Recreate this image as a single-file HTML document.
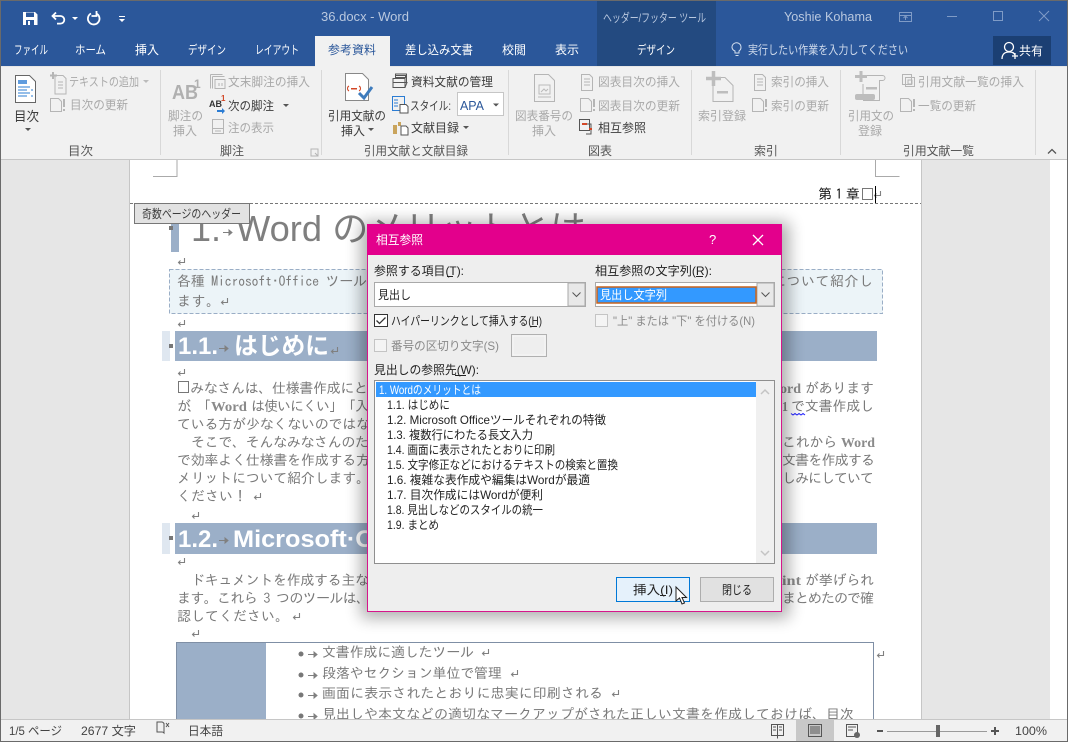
<!DOCTYPE html>
<html lang="ja"><head><meta charset="utf-8"><title>36.docx - Word</title>
<style>
html,body{margin:0;padding:0;background:#fff;width:1068px;height:742px;overflow:hidden}
svg{display:block}
text{font-family:"Liberation Sans","Noto Sans CJK JP",sans-serif;font-size:12px;white-space:pre}
.w{fill:#fff}.t{fill:#b9c8df}.k{fill:#3c3c3c}.g{fill:#a9a9a9}.b{fill:#2b579a}
.l{fill:#555}
.dl{fill:#222;font-size:12px}
.dd{fill:#8a8a8a}
.li{fill:#222;font-size:12px}
.d{font-family:"IPAGothic","Noto Sans CJK JP",sans-serif;font-size:14px;fill:#7a7a7a}
.ds{font-family:"Liberation Serif",serif;font-size:14px;font-weight:bold;fill:#8a8a8a}
.h{font-family:"Liberation Sans","Noto Sans CJK JP",sans-serif;font-weight:bold;font-size:24px;fill:#fff}
.s{fill:#444;font-size:12px}
.ic{fill:none;stroke:#b5b5b5;stroke-width:1}
.ik{fill:none;stroke:#555;stroke-width:1}
.rt{fill:none;stroke:#8a8a8a;stroke-width:1}
</style></head><body>
<svg width="1068" height="742" viewBox="0 0 1068 742" xmlns="http://www.w3.org/2000/svg">
<defs>
<filter id="sh" x="-10%" y="-10%" width="120%" height="120%"><feGaussianBlur stdDeviation="8"/></filter>
<g id="upd"><path class="ic" d="M.5 .5h8l3 3v10H.5z"/><rect x="13" y="1" width="2" height="8" fill="#b5b5b5"/><rect x="13" y="11" width="2" height="2" fill="#b5b5b5"/></g>
<g id="docl"><path class="ic" d="M.5 .5h8l3 3v13H.5z M3 5h6M3 8h6M3 11h6"/></g>
<g id="ret"><path d="M7.500 0v4.500H1.500M3.500 2.500l-2 2 2 2" fill="none" stroke="#808080" stroke-width="1.100"/></g>
<g id="arr"><path d="M0 3.500h8M6 1l3 2.500-3 2.500z" fill="#808080" stroke="#808080"/></g>
</defs>

<!-- base -->
<rect width="1068" height="742" fill="#e6e6e6"/>
<rect x="1050" y="160" width="17" height="560" fill="#fff"/>
<rect x="130" y="160" width="791" height="560" fill="#fff"/>
<path d="M129.500 160V720M921.500 160V720" stroke="#c6c6c6"/>

<!-- crop marks / header -->
<path d="M177 160v16.500h-24M875.500 160v16.500h24" fill="none" stroke="#aaa"/>
<path d="M130 203.500H921" stroke="#777" stroke-dasharray="3 2"/>
<text x="818" y="199" textLength="42" style="font-family:'IPAGothic',sans-serif;font-size:14px;fill:#111">第 1 章</text>
<rect x="862.500" y="188.500" width="10" height="11" fill="none" stroke="#777"/>
<use href="#ret" x="873" y="191"/>
<rect x="875" y="186" width="1" height="17" fill="#000"/>

<!-- H1 -->
<rect x="171" y="222" width="8" height="30" fill="#9bafc8"/>
<rect x="169" y="226" width="4" height="4" fill="#777"/>
<text x="191" y="241" style="font-size:36px;fill:#7f7f7f">1.</text>
<use href="#arr" x="223" y="229"/>
<text x="236" y="241" style="font-size:36px;fill:#7f7f7f" textLength="350" lengthAdjust="spacingAndGlyphs">Word のメリットとは</text>
<rect x="134.500" y="203.500" width="115" height="20" fill="#e2e2e2" stroke="#777"/>
<text x="142" y="218" textLength="99" lengthAdjust="spacingAndGlyphs" class="k">奇数ページのヘッダー</text>

<use href="#ret" x="177" y="258"/>
<rect x="169.500" y="269.500" width="713" height="44" fill="#ecf4f8" stroke="#9aaec6" stroke-dasharray="4 2"/>
<text class="d" x="177" y="286" textLength="190">各種 Microsoft·Office ツール</text>
<text class="d" x="772" y="286" textLength="101">について紹介し</text>
<text class="d" x="177" y="306" textLength="43">ます。</text>
<use href="#ret" x="220" y="298"/>
<use href="#ret" x="177" y="320"/>

<!-- H 1.1 -->
<rect x="162" y="331" width="8" height="30" fill="#dfe7f0"/>
<rect x="175" y="331" width="702" height="30" fill="#9bafc8"/>
<rect x="169" y="344" width="4" height="4" fill="#777"/>
<text class="h" x="178" y="354" textLength="40" lengthAdjust="spacingAndGlyphs">1.1.</text>
<use href="#arr" x="219" y="345"/>
<text class="h" x="234" y="354" textLength="95" lengthAdjust="spacingAndGlyphs">はじめに</text>
<use href="#ret" x="330" y="347"/>
<use href="#ret" x="177" y="369"/>

<!-- body -->
<rect x="178.500" y="381.500" width="10" height="11" fill="none" stroke="#777"/>
<text class="d" x="190" y="393" textLength="178">みなさんは、仕様書作成にと</text>
<text class="ds" x="780" y="393" textLength="21" lengthAdjust="spacingAndGlyphs">ord</text>
<text class="d" x="805" y="393" textLength="69">があります</text>
<text class="d" x="177" y="411" textLength="34">が、「</text>
<text class="ds" x="211" y="411" textLength="36" lengthAdjust="spacingAndGlyphs">Word</text>
<text class="d" x="251" y="411" textLength="118">は使いにくい」「入</text>
<text class="ds" x="782" y="411" textLength="6" lengthAdjust="spacingAndGlyphs">1</text>
<text class="d" x="791" y="411" textLength="83">で文書作成し</text>
<path d="M791 413.500l2 1.500 2-1.500 2 1.500 2-1.500 2 1.500 2-1.500 2 1.500" fill="none" stroke="#22f"/>
<text class="d" x="177" y="429" textLength="193">ている方が少なくないのではな</text>
<text class="d" x="191" y="447" textLength="178">そこで、そんなみなさんのた</text>
<text class="d" x="782" y="447" textLength="55">これから</text>
<text class="ds" x="841" y="447" textLength="34" lengthAdjust="spacingAndGlyphs">Word</text>
<text class="d" x="177" y="465" textLength="193">で効率よく仕様書を作成する方</text>
<text class="d" x="782" y="465" textLength="93">文書を作成する</text>
<text class="d" x="177" y="483" textLength="193">メリットについて紹介します。</text>
<text class="d" x="782" y="483" textLength="92">しみにしていて</text>
<text class="d" x="177" y="501" textLength="70">ください！</text>
<use href="#ret" x="253" y="493"/>
<use href="#ret" x="191" y="512"/>

<!-- H 1.2 -->
<rect x="162" y="523" width="8" height="31" fill="#dfe7f0"/>
<rect x="175" y="523" width="702" height="31" fill="#9bafc8"/>
<rect x="169" y="536" width="4" height="4" fill="#777"/>
<text class="h" x="178" y="547" textLength="40" lengthAdjust="spacingAndGlyphs">1.2.</text>
<use href="#arr" x="219" y="537"/>
<text class="h" x="233" y="547" textLength="194" lengthAdjust="spacingAndGlyphs">Microsoft·Office</text>
<use href="#ret" x="177" y="558"/>

<text class="d" x="191" y="585" textLength="178">ドキュメントを作成する主な</text>
<text class="ds" x="782" y="585" textLength="19" lengthAdjust="spacingAndGlyphs">int</text>
<text class="d" x="805" y="585" textLength="69">が挙げられ</text>
<text class="d" x="177" y="603" textLength="193">ます。これら 3 つのツールは、</text>
<text class="d" x="782" y="603" textLength="92">まとめたので確</text>
<text class="d" x="177" y="621" textLength="112">認してください。</text>
<use href="#ret" x="292" y="613"/>
<use href="#ret" x="191" y="630"/>

<!-- table -->
<rect x="176.500" y="642.500" width="697" height="90" fill="#fff" stroke="#7f8fa5"/>
<rect x="177" y="643" width="89" height="77" fill="#9bafc8"/>
<use href="#ret" x="876" y="651"/>
<g fill="#777"><circle cx="301" cy="654" r="2.500"/><circle cx="301" cy="675" r="2.500"/><circle cx="301" cy="695" r="2.500"/><circle cx="301" cy="716" r="2.500"/></g>
<use href="#arr" x="308" y="651"/><use href="#arr" x="308" y="672"/><use href="#arr" x="308" y="692"/><use href="#arr" x="308" y="713"/>
<text class="d" x="322" y="657" textLength="152">文書作成に適したツール</text><use href="#ret" x="481" y="649"/>
<text class="d" x="322" y="678" textLength="180">段落やセクション単位で管理</text><use href="#ret" x="510" y="670"/>
<text class="d" x="322" y="698" textLength="281">画面に表示されたとおりに忠実に印刷される</text><use href="#ret" x="611" y="690"/>
<text class="d" x="322" y="719" textLength="532">見出しや本文などの適切なマークアップがされた正しい文書を作成しておけば、目次</text>

<!-- title bar + tabs -->
<rect x="0" y="0" width="1068" height="66" fill="#2b579a"/>
<rect x="0" y="0" width="1068" height="1" fill="#6a6a6a"/>
<rect x="597" y="1" width="119" height="65" fill="#234a80"/>
<rect x="993" y="36" width="58" height="29" fill="#1b3f73"/>
<rect x="315" y="36" width="75" height="31" fill="#f1f1f1"/>

<!-- QAT -->
<path d="M23 12h12l2.500 2.500V25H23z" fill="#fff"/>
<rect x="26" y="12.500" width="8" height="4.500" fill="#2b579a"/>
<rect x="26" y="20" width="8" height="5" fill="#2b579a"/>
<rect x="28" y="21" width="2" height="4" fill="#fff"/>
<path d="M56 12.500l-3.500 3.500 3.500 3.500M53 16h7.500a3.800 3.800 0 0 1 0 7.600H57" fill="none" stroke="#fff" stroke-width="1.800"/>
<path d="M72 17h6l-3 3z" fill="#fff"/>
<path d="M91 13.500a5.800 5.800 0 1 0 5-.2M96.500 11v5h-5" fill="none" stroke="#fff" stroke-width="1.800"/>
<path d="M119 16h6v1h-6zM119 19h6l-3 3z" fill="#fff"/>
<text class="t" x="321" y="21" textLength="88" lengthAdjust="spacingAndGlyphs" style="font-size:13px">36.docx - Word</text>
<text class="t" x="603" y="22" textLength="103" lengthAdjust="spacingAndGlyphs">ヘッダー/フッター ツール</text>
<text class="t" x="784" y="21" textLength="88" lengthAdjust="spacingAndGlyphs" style="font-size:13px">Yoshie Kohama</text>
<g fill="none" stroke="#7f9bc6"><rect x="899.500" y="12.500" width="12" height="9"/><path d="M899 15.500h13M905.500 20v-3M903.500 18l2-2 2 2"/><path d="M947 16.500h10"/><rect x="993.500" y="11.500" width="9" height="9"/><path d="M1039 11l10 10M1049 11l-10 10"/></g>

<g class="w">
<text class="w" x="14" y="54" textLength="34" lengthAdjust="spacingAndGlyphs">ファイル</text>
<text class="w" x="75" y="54" textLength="31" lengthAdjust="spacingAndGlyphs">ホーム</text>
<text class="w" x="135" y="54" textLength="24" lengthAdjust="spacingAndGlyphs">挿入</text>
<text class="w" x="188" y="54" textLength="38" lengthAdjust="spacingAndGlyphs">デザイン</text>
<text class="w" x="255" y="54" textLength="44" lengthAdjust="spacingAndGlyphs">レイアウト</text>
<text class="b" x="328" y="54" textLength="48" lengthAdjust="spacingAndGlyphs">参考資料</text>
<text class="w" x="405" y="54" textLength="68" lengthAdjust="spacingAndGlyphs">差し込み文書</text>
<text class="w" x="502" y="54" textLength="24" lengthAdjust="spacingAndGlyphs">校閲</text>
<text class="w" x="555" y="54" textLength="24" lengthAdjust="spacingAndGlyphs">表示</text>
<text class="w" x="637" y="54" textLength="38" lengthAdjust="spacingAndGlyphs">デザイン</text>
</g>
<path d="M739 47.500a4.500 4.500 0 1 1 7 3.500v2h-4v-2a4.500 4.500 0 0 1-3-3.500zM742.500 55.500h3" transform="translate(-7 0)" fill="none" stroke="#d6e0ef"/>
<text x="748" y="54" textLength="160" lengthAdjust="spacingAndGlyphs" style="fill:#d0dbec">実行したい作業を入力してください</text>
<circle cx="1009" cy="47" r="4.500" fill="none" stroke="#fff" stroke-width="1.300"/><path d="M1002 59c0-5 3-7 7-7s5 1 6 3M1012 56h6M1015 53v6" fill="none" stroke="#fff" stroke-width="1.300"/>
<text class="w" x="1019" y="55" textLength="24" lengthAdjust="spacingAndGlyphs">共有</text>

<!-- ribbon -->
<rect x="0" y="67" width="1068" height="92" fill="#f1f1f1"/>
<rect x="315" y="66" width="75" height="2" fill="#f1f1f1"/>
<rect x="0" y="159" width="1068" height="1" fill="#c6c6c6"/>
<g stroke="#d8d8d8"><path d="M160.500 70v85M321.500 70v85M508.500 70v85M691.500 70v85M840.500 70v85M1035.500 70v85"/></g>

<!-- 目次 -->
<path d="M15.500 75.500h14l6 6v21h-20z" fill="#fff" stroke="#666"/>
<path d="M18 81h9M18 83h9" stroke="#2b7cd3" stroke-width="1.500"/><path d="M18 87h12M18 90h9M18 93h12M18 96h9M31 90h2M31 96h2" stroke="#2b7cd3"/>
<text class="k" x="14" y="121" textLength="25" lengthAdjust="spacingAndGlyphs" style="font-size:13px">目次</text>
<path d="M25 128h6l-3 3z" fill="#555"/>
<path class="ic" d="M55 75.500h8l3 3V94H55zM58 82h5M58 85h5M58 88h5"/><path d="M53 72v7M50 75.500h7" stroke="#b5b5b5" stroke-width="2"/>
<text class="g" x="69" y="86" textLength="70" lengthAdjust="spacingAndGlyphs">テキストの追加</text>
<path d="M143 80h6l-3 3z" fill="#bbb"/>
<use href="#upd" x="50" y="98"/>
<text class="g" x="70" y="109" textLength="58" lengthAdjust="spacingAndGlyphs">目次の更新</text>
<text class="l" x="68" y="155" textLength="25" lengthAdjust="spacingAndGlyphs">目次</text>

<!-- 脚注 -->
<text x="172" y="99" textLength="26" lengthAdjust="spacingAndGlyphs" style="font-size:20px;font-weight:bold;fill:#b0b0b0">AB</text>
<text x="194" y="88" style="font-size:12px;font-weight:bold;fill:#b0b0b0">1</text>
<text class="g" x="168" y="120" textLength="35" lengthAdjust="spacingAndGlyphs">脚注の</text>
<text class="g" x="173" y="135" textLength="24" lengthAdjust="spacingAndGlyphs">挿入</text>
<path class="ic" d="M210.500 74.500h12M212.500 76.500h12M210.500 74.500v14M212.500 76.500v12M215 79.500h10v9h-10zM219 83v3M222 83v3"/>
<text class="g" x="228" y="86" textLength="82" lengthAdjust="spacingAndGlyphs">文末脚注の挿入</text>
<text x="209" y="107" style="font-size:9px;font-weight:bold;fill:#333">AB</text>
<text x="221" y="101" style="font-size:8px;font-weight:bold;fill:#d24726">1</text>
<path d="M217 110h5v-2l3 3-3 3v-2h-5z" fill="#2b7cd3"/>
<text class="k" x="228" y="110" textLength="46" lengthAdjust="spacingAndGlyphs">次の脚注</text>
<path d="M283 104h6l-3 3z" fill="#555"/>
<path class="ic" d="M212.500 119.500h11v14h-11zM212.500 128.500h11M215 131h6"/>
<text class="g" x="228" y="132" textLength="46" lengthAdjust="spacingAndGlyphs">注の表示</text>
<text class="l" x="220" y="155" textLength="24" lengthAdjust="spacingAndGlyphs">脚注</text>
<path d="M311 149h7v7h-7zM315 153l3 3" fill="none" stroke="#b5b5b5"/>

<!-- 引用文献 -->
<path d="M345.500 73.500h17l6 6v21h-23z" fill="#fff" stroke="#888"/>
<path d="M349 86c-2 1-2 4 0 5M359 86c2 1 2 4 0 5" fill="none" stroke="#d24726"/><rect x="351" y="88" width="6" height="1.500" fill="#d24726"/>
<path d="M359 93l5 5 8-11" fill="none" stroke="#3e7cbd" stroke-width="3"/>
<text class="k" x="328" y="120" textLength="58" lengthAdjust="spacingAndGlyphs">引用文献の</text>
<text class="k" x="341" y="135" textLength="24" lengthAdjust="spacingAndGlyphs">挿入</text>
<path d="M368 128h6l-3 3z" fill="#555"/>
<path class="ik" d="M395.500 77.500h10v-2h-10zM393 78.500h12v9h-12zM393 82.500h14l-2 5M395.500 75.500v-1.500h11v9" />
<text class="k" x="411" y="86" textLength="82" lengthAdjust="spacingAndGlyphs">資料文献の管理</text>
<path fill="none" stroke="#2b7cd3" d="M392.500 96.500h12v14h-12zM394 100h4M394 103h4M394 106h4"/><path d="M400 104.500h6l2 2v6.500h-8z" fill="#fff" stroke="#555"/>
<text class="k" x="410" y="110" textLength="41" lengthAdjust="spacingAndGlyphs">スタイル:</text>
<rect x="457.500" y="92.500" width="46" height="23" fill="#fff" stroke="#c6c6c6"/>
<text x="460" y="110" textLength="24" lengthAdjust="spacingAndGlyphs" style="fill:#2b579a;font-size:13px">APA</text>
<path d="M493 103.500h6l-3 3z" fill="#555"/>
<path d="M393 125h4v9h-4zM398 122h3v4h-3z" fill="#c9a45c"/><path d="M401 126h5l2 2v7h-7z" fill="#fff" stroke="#555"/>
<text class="k" x="411" y="132" textLength="48" lengthAdjust="spacingAndGlyphs">文献目録</text>
<path d="M463 126h6l-3 3z" fill="#555"/>
<text class="l" x="364" y="155" textLength="104" lengthAdjust="spacingAndGlyphs">引用文献と文献目録</text>

<!-- 図表 -->
<path class="ic" d="M534.500 74.500h14l6 6v21h-20z"/><rect x="539" y="85" width="11" height="9" fill="none" stroke="#bbb"/><path d="M541 92l3-3 2 2 2-2" stroke="#bbb" fill="none"/><path d="M538 97h13" stroke="#bbb"/>
<text class="g" x="515" y="120" textLength="58" lengthAdjust="spacingAndGlyphs">図表番号の</text>
<text class="g" x="532" y="135" textLength="24" lengthAdjust="spacingAndGlyphs">挿入</text>
<use href="#docl" x="581" y="74"/>
<text class="g" x="598" y="86" textLength="82" lengthAdjust="spacingAndGlyphs">図表目次の挿入</text>
<use href="#upd" x="580" y="98"/>
<text class="g" x="598" y="110" textLength="82" lengthAdjust="spacingAndGlyphs">図表目次の更新</text>
<path d="M579.500 119.500h10v11h-10zM586 124h5v10h-5" fill="none" stroke="#555"/><rect x="582" y="123" width="5" height="2" fill="#d24726"/><rect x="589" y="128" width="3" height="2" fill="#d24726"/>
<text class="k" x="598" y="132" textLength="48" lengthAdjust="spacingAndGlyphs">相互参照</text>
<text class="l" x="588" y="155" textLength="24" lengthAdjust="spacingAndGlyphs">図表</text>

<!-- 索引 -->
<path class="ic" d="M713 77.500h12l8 8v16h-20v-16"/><path d="M706 78.500h15M713.500 71v15" stroke="#bdbdbd" stroke-width="3.500"/><rect x="717" y="91" width="11" height="2.500" fill="#bdbdbd"/>
<text class="g" x="698" y="120" textLength="48" lengthAdjust="spacingAndGlyphs">索引登録</text>
<use href="#docl" x="754" y="74"/>
<text class="g" x="771" y="86" textLength="58" lengthAdjust="spacingAndGlyphs">索引の挿入</text>
<use href="#upd" x="752" y="98"/>
<text class="g" x="771" y="110" textLength="58" lengthAdjust="spacingAndGlyphs">索引の更新</text>
<text class="l" x="754" y="155" textLength="24" lengthAdjust="spacingAndGlyphs">索引</text>

<!-- 引用文献一覧 -->
<path class="ic" d="M860.500 75.500h22a2 2 0 0 1 0 5h-3v20h-16v-3M863 84v10"/><path d="M855 76.500h12M861 71v11" stroke="#bdbdbd" stroke-width="3"/><rect x="866" y="87" width="11" height="2.500" fill="#bdbdbd"/><rect x="855" y="94" width="20" height="6" rx="2" fill="#bdbdbd"/>
<text class="g" x="848" y="120" textLength="46" lengthAdjust="spacingAndGlyphs">引用文の</text>
<text class="g" x="858" y="135" textLength="24" lengthAdjust="spacingAndGlyphs">登録</text>
<path class="ic" d="M902.500 74.500h9v10h-9zM905.500 77.500h9v9h-9zM908 80h4v4h-4z"/>
<text class="g" x="918" y="86" textLength="106" lengthAdjust="spacingAndGlyphs">引用文献一覧の挿入</text>
<use href="#upd" x="900" y="98"/>
<text class="g" x="918" y="110" textLength="58" lengthAdjust="spacingAndGlyphs">一覧の更新</text>
<text class="l" x="903" y="155" textLength="71" lengthAdjust="spacingAndGlyphs">引用文献一覧</text>
<path d="M1048 153.500l4-4 4 4" fill="none" stroke="#555" stroke-width="1.300"/>

<!-- status bar -->
<rect x="0" y="719" width="1068" height="23" fill="#f1f1f1"/>
<rect x="0" y="719" width="1068" height="1" fill="#c6c6c6"/>
<rect x="0" y="741" width="1068" height="1" fill="#6a6a6a"/>
<rect x="0" y="160" width="1" height="582" fill="#6a6a6a"/><rect x="1067" y="160" width="1" height="582" fill="#6a6a6a"/>
<rect x="0" y="0" width="1" height="160" fill="#6a6a6a"/><rect x="1067" y="0" width="1" height="160" fill="#6a6a6a"/>
<text class="s" x="9" y="735" textLength="53" lengthAdjust="spacingAndGlyphs">1/5 ページ</text>
<text class="s" x="81" y="735" textLength="55" lengthAdjust="spacingAndGlyphs">2677 文字</text>
<path d="M157 722h5c1 0 1 .5 2 1.500v9.500c-1-1-1-1-2-1h-5zM164 723.500v9.500" fill="none" stroke="#555"/><path d="M166 723l3 4M169 723l-3 4" stroke="#555"/>
<text class="s" x="188" y="735" textLength="35" lengthAdjust="spacingAndGlyphs">日本語</text>
<path class="ik" d="M771.500 724.500h12v11h-12zM777.500 724.500v14M773 727h3M773 730h3M779 727h3M779 730h3"/>
<rect x="796" y="720" width="38" height="21" fill="#c8c8c8"/>
<path class="ik" d="M808.500 724.500h13v12h-13zM810 727h10M810 729h10M810 731h10M810 733h10"/>
<path class="ik" d="M846.500 724.500h11v12h-11zM848 727h8M848 730h5"/><circle cx="857" cy="735" r="3" fill="#666"/>
<rect x="877" y="730" width="6" height="2" fill="#555"/>
<rect x="887" y="731" width="100" height="1" fill="#9a9a9a"/>
<rect x="936" y="725" width="4" height="12" fill="#666"/>
<path d="M991 731h8M995 727v8" stroke="#555" stroke-width="2"/>
<text class="s" x="1015" y="735" textLength="32" lengthAdjust="spacingAndGlyphs">100%</text>

<!-- dialog -->
<rect x="361" y="222" width="428" height="396" fill="#000" opacity=".32" filter="url(#sh)"/>
<rect x="367.500" y="224.500" width="414" height="387" fill="#eee" stroke="#d6168b"/>
<rect x="367" y="224" width="415" height="31" fill="#e3008c"/>
<text x="376" y="244" textLength="47" lengthAdjust="spacingAndGlyphs" style="fill:#fff;font-size:12px">相互参照</text>
<text x="709" y="244" style="fill:#fff;font-size:13px">?</text>
<path d="M753 235l10 10M763 235l-10 10" stroke="#fff" stroke-width="1.300"/>

<text class="dl" x="374" y="275" textLength="90" lengthAdjust="spacingAndGlyphs">参照する項目(T):</text><rect x="447" y="276" width="6" height="1" fill="#222"/>
<text class="dl" x="595" y="275" textLength="117" lengthAdjust="spacingAndGlyphs">相互参照の文字列(R):</text><rect x="696" y="276" width="7" height="1" fill="#222"/>

<rect x="374.500" y="282.500" width="211" height="24" fill="#fff" stroke="#a9a9a9"/>
<rect x="568" y="283" width="17" height="23" fill="#e8e8e8" stroke="#a9a9a9"/>
<path d="M572.500 292.500l4 4 4-4" fill="none" stroke="#555"/>
<text class="li" x="378" y="299" textLength="33" lengthAdjust="spacingAndGlyphs">見出し</text>

<rect x="595.500" y="282.500" width="179" height="24" fill="#fff" stroke="#a9a9a9"/>
<rect x="757" y="283" width="17" height="23" fill="#e8e8e8" stroke="#a9a9a9"/>
<path d="M761.500 292.500l4 4 4-4" fill="none" stroke="#555"/>
<rect x="597" y="287" width="159" height="16" fill="#3399ff" stroke="#c8641e" stroke-width="1.500"/>
<text x="600" y="299" textLength="67" lengthAdjust="spacingAndGlyphs" style="fill:#fff;font-size:12px">見出し文字列</text>

<rect x="374.500" y="314.500" width="13" height="12" fill="#fff" stroke="#333"/>
<path d="M376.500 320.500l3 3 6-6" fill="none" stroke="#333" stroke-width="1.300"/>
<text class="dl" x="391" y="325" textLength="151" lengthAdjust="spacingAndGlyphs">ハイパーリンクとして挿入する(H)</text><rect x="530" y="326" width="7" height="1" fill="#222"/>
<rect x="595.500" y="314.500" width="12" height="12" fill="#f4f4f4" stroke="#c4c4c4"/>
<text class="dd" x="613" y="325" textLength="142" lengthAdjust="spacingAndGlyphs">"上" または "下" を付ける(N)</text>

<rect x="374.500" y="339.500" width="12" height="12" fill="#f4f4f4" stroke="#c4c4c4"/>
<text class="dd" x="391" y="350" textLength="108" lengthAdjust="spacingAndGlyphs">番号の区切り文字(S)</text>
<rect x="511.500" y="334.500" width="35" height="22" fill="#eee" stroke="#b0b0b0"/>
<rect x="513" y="336" width="32" height="19" fill="none" stroke="#f7f7f7"/>

<text class="dl" x="374" y="374" textLength="105" lengthAdjust="spacingAndGlyphs">見出しの参照先(W):</text><rect x="455" y="375" width="11" height="1" fill="#222"/>

<rect x="374.500" y="380.500" width="400" height="183" fill="#fff" stroke="#8f8f8f"/>
<rect x="376" y="382" width="380" height="15" fill="#3399ff"/>
<rect x="756" y="381" width="18" height="182" fill="#f0f0f0"/>
<path d="M761 394l4-4 4 4M761 551l4 4 4-4" fill="none" stroke="#c4c4c4" stroke-width="1.500"/>
<text x="379" y="394" textLength="102" lengthAdjust="spacingAndGlyphs" style="fill:#fff;font-size:12px">1. Wordのメリットとは</text>
<text class="li" x="387" y="409" textLength="63" lengthAdjust="spacingAndGlyphs">1.1. はじめに</text>
<text class="li" x="387" y="424" textLength="219" lengthAdjust="spacingAndGlyphs">1.2. Microsoft Officeツールそれぞれの特徴</text>
<text class="li" x="387" y="439" textLength="146" lengthAdjust="spacingAndGlyphs">1.3. 複数行にわたる長文入力</text>
<text class="li" x="387" y="454" textLength="168" lengthAdjust="spacingAndGlyphs">1.4. 画面に表示されたとおりに印刷</text>
<text class="li" x="387" y="469" textLength="231" lengthAdjust="spacingAndGlyphs">1.5. 文字修正などにおけるテキストの検索と置換</text>
<text class="li" x="387" y="484" textLength="203" lengthAdjust="spacingAndGlyphs">1.6. 複雑な表作成や編集はWordが最適</text>
<text class="li" x="387" y="499" textLength="156" lengthAdjust="spacingAndGlyphs">1.7. 目次作成にはWordが便利</text>
<text class="li" x="387" y="514" textLength="156" lengthAdjust="spacingAndGlyphs">1.8. 見出しなどのスタイルの統一</text>
<text class="li" x="387" y="529" textLength="52" lengthAdjust="spacingAndGlyphs">1.9. まとめ</text>

<rect x="616.500" y="577.500" width="73" height="24" fill="#e5f1fb" stroke="#0078d7"/>
<text class="dl" x="633" y="594" textLength="40" lengthAdjust="spacingAndGlyphs">挿入(I)</text><rect x="660" y="595" width="6" height="1" fill="#222"/>
<rect x="700.500" y="577.500" width="73" height="24" fill="#e1e1e1" stroke="#adadad"/>
<text class="dl" x="722" y="594" textLength="30" lengthAdjust="spacingAndGlyphs">閉じる</text>
<path d="M676 587v14l3.500-3 2.500 6 2.500-1-2.500-5.500h4.500z" fill="#fff" stroke="#222"/>
</svg>
</body></html>
